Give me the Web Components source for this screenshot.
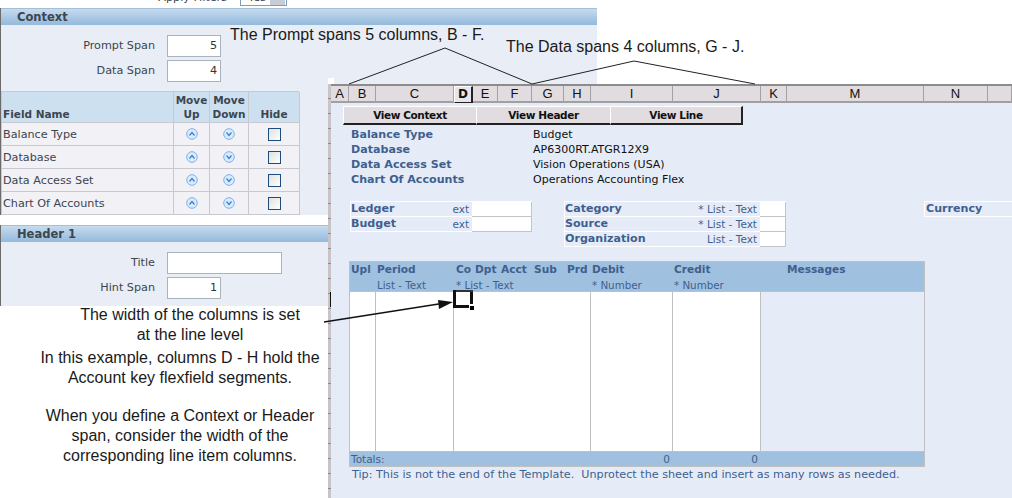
<!DOCTYPE html>
<html>
<head>
<meta charset="utf-8">
<style>
    html, body { margin: 0; padding: 0; background: #fff; }
    body { width: 1012px; height: 498px; overflow: hidden; position: relative; font-family: "DejaVu Sans", sans-serif; }
</style>
</head>
<body>
<setup-panel></setup-panel>
<sheet-window></sheet-window>
<note-layer></note-layer>

<script>
((customElements, document) => {
    'use strict';

    const uiFont = '"DejaVu Sans", Tahoma, sans-serif';

    class SectionBar extends HTMLElement {
        connectedCallback() {
            this.attachShadow({mode: 'open'}).innerHTML = `
                <style>
                    :host { display: block; height: 17px; box-sizing: border-box; padding-left: 16px;
                        border-top: 1px solid #a5bfd8;
                        background: linear-gradient(#c6dbee, #93b9dc);
                        font: bold 11.5px/17px ${uiFont}; color: #3c4650; }
                </style>
                <slot></slot>`;
        }
    }

    class FieldRow extends HTMLElement {
        connectedCallback() {
            const wide = this.hasAttribute('wide');
            this.attachShadow({mode: 'open'}).innerHTML = `
                <style>
                    :host { display: flex; align-items: center; height: 25px; font: 11.2px ${uiFont}; color: #3c4650; }
                    .label { width: 154px; text-align: right; }
                    .input { margin-left: 12px; box-sizing: border-box; width: ${wide ? 115 : 54}px; height: 22px;
                        border: 1px solid #a9b3bc; background: #fff; text-align: right;
                        padding-right: 3px; line-height: 20px; color: #333; }
                </style>
                <span class="label">${this.getAttribute('label')}</span>
                <span class="input">${this.getAttribute('value') || ''}</span>`;
        }
    }

    class MoveIcon extends HTMLElement {
        connectedCallback() {
            const points = this.getAttribute('dir') === 'up' ? '3.5,7.5 6,4.5 8.5,7.5' : '3.5,4.5 6,7.5 8.5,4.5';
            this.attachShadow({mode: 'open'}).innerHTML = `
                <style>:host { display: inline-block; width: 12px; height: 12px; line-height: 0; }</style>
                <svg width="12" height="12" viewBox="0 0 12 12">
                    <circle cx="6" cy="6" r="5.3" fill="#dcebfa" stroke="#7db2ea"/>
                    <polyline points="${points}" fill="none" stroke="#2f7fdc" stroke-width="1.2"/>
                </svg>`;
        }
    }

    class FieldTable extends HTMLElement {
        connectedCallback() {
            const rows = ['Balance Type', 'Database', 'Data Access Set', 'Chart Of Accounts'].map(name => `
                <div class="cell name">${name}</div>
                <div class="cell"><move-icon dir="up"></move-icon></div>
                <div class="cell"><move-icon dir="down"></move-icon></div>
                <div class="cell"><span class="box"></span></div>`).join('');
            this.attachShadow({mode: 'open'}).innerHTML = `
                <style>
                    :host { display: grid; width: 298px;
                        grid-template-columns: 172px 36px 39px 51px;
                        grid-template-rows: 31px repeat(4, 23px);
                        border-top: 1px solid #c8c8d0; border-left: 1px solid #c8c8d0;
                        box-sizing: border-box; font: 11.2px ${uiFont}; color: #3c4650; }
                    .cell { display: flex; align-items: center; justify-content: center;
                        background: #f1f1f6; border-right: 1px solid #c8c8d0; border-bottom: 1px solid #c8c8d0;
                        box-sizing: border-box; }
                    .head { background: #cde0f0; font: bold 10.5px/14px ${uiFont}; text-align: center; align-items: flex-end; padding-bottom: 1px; }
                    .name { justify-content: flex-start; padding-left: 1px; padding-top: 1px; }
                    .box { width: 11px; height: 11px; border: 1px solid #1c4c80;
                        background: linear-gradient(135deg, #e0e0dc, #fff); }
                </style>
                <div class="cell head name">Field Name</div>
                <div class="cell head">Move<br>Up</div>
                <div class="cell head">Move<br>Down</div>
                <div class="cell head">Hide</div>
                ${rows}`;
        }
    }

    class SetupPanel extends HTMLElement {
        connectedCallback() {
            this.attachShadow({mode: 'open'}).innerHTML = `
                <style>
                    :host { position: absolute; left: 0; top: 0; width: 597px; height: 306px; display: block; }
                    .filters { height: 6px; margin-bottom: 2px; overflow: hidden; display: flex; justify-content: flex-end; width: 287px;
                        font: 11.2px/8px ${uiFont}; color: #3c4650; }
                    .label { position: relative; top: -6px; }
                    .go { margin-left: 13px; width: 47px; height: 6px; box-sizing: border-box; position: relative;
                        border: 1px solid #7f9db9; border-top: 0; background: linear-gradient(90deg, #fff 64%, #c8ccd8 64%, #c8ccd8 97%, #fff 97%); }
                    .go span { position: relative; top: -6px; left: 7px; }
                    .upper { background: #e8edf6; height: 207px; border-left: 1px solid #6b6b6b; }
                    .fields { padding-top: 8px; height: 58px; width: 330px; }
                    .gap { height: 10px; width: 330px; background: #fff; }
                    .lower { width: 328px; height: 81px; background: #e8edf6; border-left: 1px solid #6b6b6b; box-sizing: border-box; }
                    .lower-fields { padding-top: 8px; }
                </style>
                <div class="filters"><span class="label">Apply Filters</span><div class="go"><span>Yes</span></div></div>
                <div class="upper">
                    <section-bar>Context</section-bar>
                    <div class="fields">
                        <field-row label="Prompt Span" value="5"></field-row>
                        <field-row label="Data Span" value="4"></field-row>
                    </div>
                    <field-table></field-table>
                </div>
                <div class="gap"></div>
                <div class="lower">
                    <section-bar>Header 1</section-bar>
                    <div class="lower-fields">
                        <field-row label="Title" wide></field-row>
                        <field-row label="Hint Span" value="1"></field-row>
                    </div>
                </div>`;
        }
    }

    class ColumnHeaders extends HTMLElement {
        connectedCallback() {
            const cols = [['A',18],['B',27],['C',78],['D',19],['E',25],['F',34],['G',32],['H',27],['I',82],['J',88],['K',26],['M',137],['N',64],['',24]];
            this.attachShadow({mode: 'open'}).innerHTML = `
                <style>
                    :host { display: grid; height: 19px; box-sizing: border-box;
                        grid-template-columns: ${cols.map(c => c[1] + 'px').join(' ')};
                        border-top: 2px solid #8c8c8c; border-bottom: 2px solid #a0a0a0;
                        background: #e0dce0; font: 13px/15px "Liberation Sans", sans-serif; color: #111; }
                    div { text-align: center; border-right: 1px solid #a4a0a4; box-sizing: border-box; }
                    .on { font: bold 12px/15px ${uiFont}; background: #e8e4e8;
                        border: 1px solid #fff; border-right: 2px solid #222; border-bottom: 1px solid #222; }
                </style>
                ${cols.map(c => `<div class="${c[0] === 'D' ? 'on' : ''}">${c[0]}</div>`).join('')}`;
        }
    }

    class ButtonBar extends HTMLElement {
        connectedCallback() {
            const labels = [['View Context',133],['View Header',134],['View Line',133]];
            this.attachShadow({mode: 'open'}).innerHTML = `
                <style>
                    :host { display: flex; margin: 3px 0 0 12px; height: 19px; }
                    div { box-sizing: border-box; height: 19px; background: #e0dce0; text-align: center;
                        font: bold 10.5px/17px ${uiFont}; letter-spacing: -.4px; color: #111;
                        border-top: 1px solid #fff; border-left: 1px solid #fff; border-bottom: 2px solid #222; }
                    div:last-child { border-right: 2px solid #222; }
                </style>
                ${labels.map(l => `<div style="width:${l[1]}px">${l[0]}</div>`).join('')}`;
        }
    }

    class InfoList extends HTMLElement {
        connectedCallback() {
            const rows = [['Balance Type','Budget'],['Database','AP6300RT.ATGR12X9'],['Data Access Set','Vision Operations (USA)'],['Chart Of Accounts','Operations Accounting Flex']];
            this.attachShadow({mode: 'open'}).innerHTML = `
                <style>
                    :host { display: grid; grid-template-columns: 182px auto; grid-auto-rows: 15px;
                        margin: 2px 0 0 20px; font: 11px/15px ${uiFont}; color: #111; }
                    b { color: #3f5f8f; font-size: 11.1px; }
                </style>
                ${rows.map(r => `<b>${r[0]}</b><span>${r[1]}</span>`).join('')}`;
        }
    }

    class EntryGroup extends HTMLElement {
        connectedCallback() {
            const rows = JSON.parse(this.getAttribute('rows'));
            const label = this.getAttribute('label-width');
            const input = this.getAttribute('input-width');
            this.attachShadow({mode: 'open'}).innerHTML = `
                <style>
                    :host { display: grid; grid-template-columns: ${label}px ${input}px; grid-auto-rows: 15px; align-self: start;
                        border-top: 1px solid #fff; font: 11.1px/14px ${uiFont}; color: #3f5f8f; }
                    .l { display: flex; justify-content: space-between; border-bottom: 1px solid #fff; border-left: 1px solid #fff; padding: 0 3px 0 0; box-sizing: border-box; }
                    .i { background: #fff; border-bottom: 1px solid #c4c4c4; border-right: 1px solid #c4c4c4; box-sizing: border-box; }
                    .hint { font-size: 10.5px; }
                </style>
                ${rows.map(r => `<div class="l"><b>${r[0]}</b><span class="hint">${r[1]}</span></div><div class="i"></div>`).join('')}`;
        }
    }

    class LineTable extends HTMLElement {
        connectedCallback() {
            this.attachShadow({mode: 'open'}).innerHTML = `
                <style>
                    :host { display: block; width: 576px; margin: 14px 0 0 18px; border: 1px solid #c0c0c0; box-sizing: border-box;
                        position: relative; font: 11px ${uiFont}; color: #3f5f8f; }
                    .cols { display: grid; grid-template-columns: 26px 78px 137px 82px 88px 1fr; }
                    .head { background: #9fc0de; height: 30px; border-bottom: 1px solid #c0c0c0; box-sizing: border-box; }
                    .head > div { padding-left: 1px; font: bold 10.6px/14px ${uiFont}; white-space: nowrap; }
                    .head small { display: block; font: 10.3px/14px ${uiFont}; margin-top: 2px; }
                    .head .acct { padding-left: 2px; }
                    .segs { display: grid; grid-template-columns: 19px 26px 33px 33px auto; }
                    .body { height: 159px; }
                    .body div { background: #fff; border-right: 1px solid #c0c0c0; }
                    .body .rest { background: #e5ecf7; border: 0; }
                    .totals { background: #9fc0de; height: 15px; border-top: 1px solid #c0c0c0; box-sizing: border-box;
                        font-size: 10.5px; line-height: 14px; }
                    .totals div { text-align: right; padding-right: 3px; }
                    .totals .t { text-align: left; padding-left: 1px; }
                    svg { position: absolute; left: 103px; top: 28px; }
                </style>
                <div class="cols head">
                    <div>Upl</div>
                    <div>Period<small>List - Text</small></div>
                    <div class="acct"><span class="segs"><span>Co</span><span>Dpt</span><span>Acct</span><span>Sub</span><span>Prd</span></span><small>* List - Text</small></div>
                    <div>Debit<small>* Number</small></div>
                    <div>Credit<small>* Number</small></div>
                    <div style="padding-left:26px">Messages</div>
                </div>
                <div class="cols body"><div></div><div></div><div></div><div></div><div></div><div class="rest"></div></div>
                <div class="cols totals">
                    <div class="t" style="grid-column: 1 / 4">Totals:</div>
                    <div>0</div><div>0</div><div></div>
                </div>
                <svg width="22" height="21" viewBox="0 0 22 21">
                    <rect x="0" y="0" width="20" height="2" fill="#333"/>
                    <rect x="0" y="0" width="3" height="18" fill="#111"/>
                    <rect x="0" y="15" width="16" height="3" fill="#111"/>
                    <rect x="17" y="2" width="3" height="12" fill="#111"/>
                    <rect x="17" y="16" width="4" height="4" fill="#000"/>
                </svg>`;
        }
    }

    class SheetWindow extends HTMLElement {
        connectedCallback() {
            this.attachShadow({mode: 'open'}).innerHTML = `
                <style>
                    :host { position: absolute; left: 328px; top: 84px; width: 684px; height: 414px; display: block; padding-left: 3px; box-sizing: border-box;
                        background: repeating-linear-gradient(#c8c4c8 0 14px, #8c8c8c 14px 15px) left top / 3px 100% no-repeat, #e5ecf7; }
                    .entries { display: flex; margin: 14px 0 0 19px; height: 46px; }
                    .tip { margin: 1px 0 0 21px; font: 11.2px/14px ${uiFont}; color: #3f5f8f; white-space: pre; }
                    .currency { position: absolute; left: 596px; top: 117px; width: 88px; height: 16px; box-sizing: border-box;
                        border: 1px solid #fff; border-right: 0; padding-left: 1px;
                        font: bold 11.1px/14px ${uiFont}; color: #3f5f8f; }
                    .notch { position: absolute; left: 0; top: -6px; width: 6px; height: 6px; background: #fff; }
                    .mark { position: absolute; left: 2px; top: 208px; width: 1px; height: 15px; background: #111; }
                </style>
                <div class="notch"></div>
                <div class="mark"></div>
                <column-headers></column-headers>
                <button-bar></button-bar>
                <info-list></info-list>
                <div class="entries">
                    <entry-group style="margin-right:32px" label-width="122" input-width="60"
                        rows='[["Ledger","ext"],["Budget","ext"]]'></entry-group>
                    <entry-group label-width="196" input-width="26"
                        rows='[["Category","* List - Text"],["Source","* List - Text"],["Organization","List - Text"]]'></entry-group>
                </div>
                <line-table></line-table>
                <div class="tip">Tip: This is not the end of the Template.  Unprotect the sheet and insert as many rows as needed.</div>
                <div class="currency">Currency</div>`;
        }
    }

    class NoteLayer extends HTMLElement {
        connectedCallback() {
            this.attachShadow({mode: 'open'}).innerHTML = `
                <style>
                    :host { position: absolute; inset: 0; display: block; pointer-events: none;
                        font: 16px/20px "Liberation Sans", Arial, sans-serif; color: #1a1a1a; }
                    svg { position: absolute; left: 0; top: 0; }
                    .note { position: absolute; white-space: nowrap; }
                    .block { position: absolute; left: 0; top: 305px; width: 360px; text-align: center; white-space: nowrap; }
                    .block p { margin: 0; }
                    .block p:first-child { padding-left: 20px; }
                    .block p + p { margin-top: 3px; }
                    .block p:last-child { margin-top: 18px; }
                </style>
                <svg width="1012" height="498" viewBox="0 0 1012 498">
                    <polyline points="349,84 445,48 532,84 634,61 755,84" fill="none" stroke="#222" stroke-width="1"/>
                    <line x1="324" y1="322" x2="445" y2="303" stroke="#111" stroke-width="1.4"/>
                    <polygon points="453,302 438,300 439,309" fill="#111"/>
                </svg>
                <div class="note" style="left:230px;top:25px">The Prompt spans 5 columns, B - F.</div>
                <div class="note" style="left:506px;top:37px">The Data spans 4 columns, G - J.</div>
                <div class="block">
                    <p>The width of the columns is set<br>at the line level</p>
                    <p>In this example, columns D - H hold the<br>Account key flexfield segments.</p>
                    <p>When you define a Context or Header<br>span, consider the width of the<br>corresponding line item columns.</p>
                </div>`;
        }
    }

    customElements.define('section-bar', SectionBar);
    customElements.define('field-row', FieldRow);
    customElements.define('move-icon', MoveIcon);
    customElements.define('field-table', FieldTable);
    customElements.define('setup-panel', SetupPanel);
    customElements.define('column-headers', ColumnHeaders);
    customElements.define('button-bar', ButtonBar);
    customElements.define('info-list', InfoList);
    customElements.define('entry-group', EntryGroup);
    customElements.define('line-table', LineTable);
    customElements.define('sheet-window', SheetWindow);
    customElements.define('note-layer', NoteLayer);
})(window.customElements, document);
</script>
</body>
</html>
